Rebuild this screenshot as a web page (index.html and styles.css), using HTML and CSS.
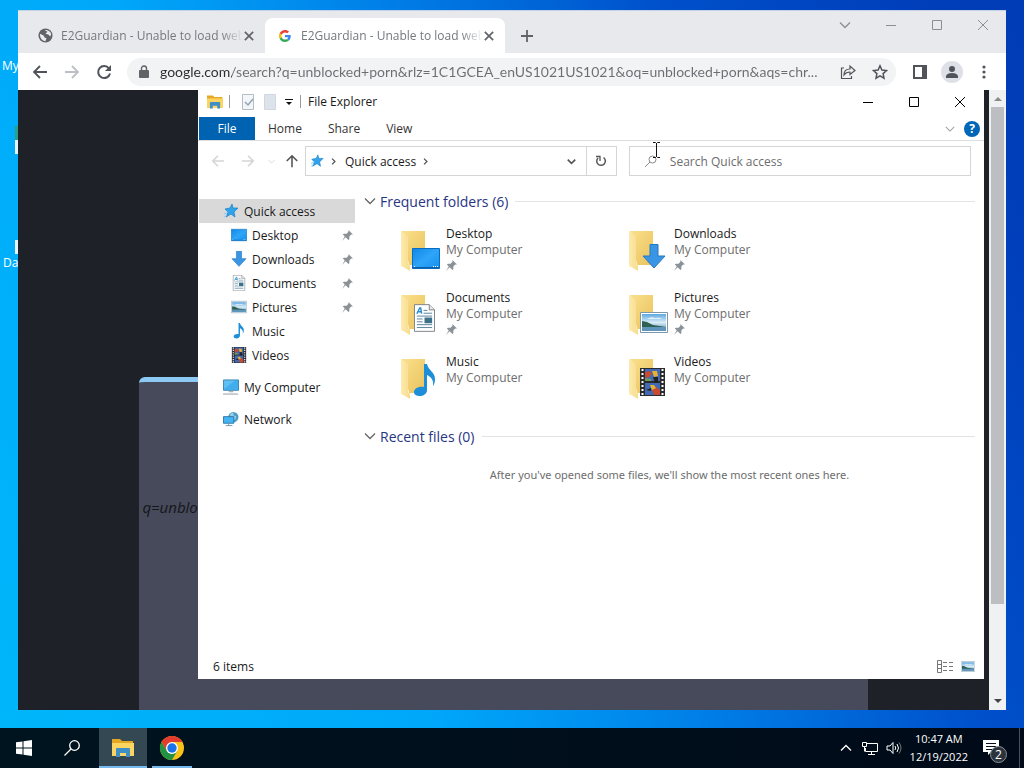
FILE: index.html
```html
<!DOCTYPE html>
<html lang="en">
  <head>
    <meta charset="UTF-8" />
    <meta name="viewport" content="width=device-width, initial-scale=1.0" />
    <title>Desktop</title>
    <link rel="stylesheet" href="styles.css">
  </head>
  <body>
    <!-- Shared icons -->
    <svg class="sprite" aria-hidden="true">
      <defs>
        <linearGradient id="gFolder" x1="0" y1="0" x2="1" y2="1">
          <stop offset="0" stop-color="#fbe08d" />
          <stop offset="1" stop-color="#e9c25c" />
        </linearGradient>
        <linearGradient id="gFront" x1="0" y1="0" x2="1" y2="0">
          <stop offset="0" stop-color="#fdeaae" />
          <stop offset="1" stop-color="#f6dc8b" />
        </linearGradient>
        <linearGradient id="gBlue" x1="0" y1="0" x2="1" y2="1">
          <stop offset="0" stop-color="#0f86e6" />
          <stop offset="0.5" stop-color="#2ea5f8" />
          <stop offset="1" stop-color="#1490f0" />
        </linearGradient>
        <linearGradient id="gSky" x1="0" y1="0" x2="0" y2="1">
          <stop offset="0" stop-color="#5ea8e0" />
          <stop offset="0.5" stop-color="#d9ecf7" />
          <stop offset="1" stop-color="#4d86b0" />
        </linearGradient>
      </defs>
      <symbol id="folder" viewBox="0 0 40 44">
        <path d="M2 3h23v34H9z" fill="url(#gFolder)" />
        <path d="M1 3l7 5v28l2 2v5l-5-3-4-2z" fill="url(#gFront)" />
      </symbol>
      <symbol id="desktop" viewBox="0 0 28 21">
        <path d="M.5.5h27v20H.5z" fill="url(#gBlue)" stroke="#0a6cc0" />
        <path d="M1 19.500h26" stroke="#0b5fa8" />
        <path d="M2 18.500h1M21 18.500h1M23 18.500h1M25 18.500h1" stroke="#fff" />
      </symbol>
      <symbol id="download" viewBox="0 0 24 25">
        <path d="M8 .5h8V12h7L12 24 1 12h7z" fill="#3a96e4" stroke="#2479c4" />
      </symbol>
      <symbol id="document" viewBox="0 0 22 29">
        <path d="M.5.5H16L21.500 6v22.500H.5z" fill="#fff" stroke="#7b8287" />
        <path d="M16 .5V6h5.500" fill="#e4e8ea" stroke="#7b8287" />
        <path d="M3 10l3-6h1l1 6M4.500 8H8" fill="none" stroke="#2b8dc9" stroke-width="1.500" />
        <path d="M10 6.500h4M10 9.500h9M3 12.500h16M3 15.500h6M3 18.500h6M3 21.500h16M3 24.500h16" stroke="#55819c" />
        <path d="M11 14h8v6h-8z" fill="#3c718a" />
      </symbol>
      <symbol id="picture" viewBox="0 0 28 21">
        <path d="M.5.5h27v20H.5z" fill="#fff" stroke="#7d98aa" />
        <path d="M2 2h24v17H2z" fill="url(#gSky)" />
        <path d="M2 9l5 1 6 3 13 2v1H2z" fill="#2f6150" />
        <path d="M2 15h24v4H2z" fill="#5f95bd" />
        <path d="M7 7q4-3 8-1 5-1 7 1z" fill="#fff" opacity=".7" />
      </symbol>
      <symbol id="music" viewBox="0 0 22 33">
        <path d="M10 0h3c1 6 8 8 8 15 0 3-1 6-2 7 1-6-2-9-6-11v15c0 4-4 6-7 6s-6-1-6-4 4-6 10-5z" fill="#1d8fd8" />
      </symbol>
      <symbol id="video" viewBox="0 0 25 28">
        <path d="M0 0h25v28H0z" fill="#292b2d" />
        <path d="M5 1h15v12H5zM5 15h15v12H5z" fill="#4169b4" />
        <path d="M2.500 1v27M22.500 1v27" stroke="#fff" stroke-width="2" stroke-dasharray="2 2" />
        <path d="M5 4l5-1 2 3-4 4-3-1zM12 22l4-3 4 3v5h-6z" fill="#c84a32" />
        <path d="M12 3h5l1 5-4 1zM10 17h4l2 3-4 2z" fill="#e8b230" />
        <path d="M13 9h5v6h-3zM6 22l5-2v3z" fill="#222" />
        <path d="M5 10l6 1v2H5z" fill="#6b9e58" />
      </symbol>
      <symbol id="star" viewBox="0 0 16 16">
        <path d="M9 1l1 4 5 0-4 4 1 5-4-3-5 3 2-5-3-3 5-1z" fill="#2fa3ec" stroke="#1b7fc6" stroke-width=".7" />
        <path d="M1 11l4-2M1 14l3-2" stroke="#8fcdf4" />
      </symbol>
      <symbol id="pin" viewBox="0 0 12 12">
        <path d="M7 0l5 5-2 0-2 2 0 3-1 1-3-3-4 4 3-5-2-2 1-1 3 0 2-2z" fill="#8a9298" />
      </symbol>
      <symbol id="computer" viewBox="0 0 17 16">
        <path d="M.5.5h16v11H.5z" fill="#5cc0f5" stroke="#3a83ad" />
        <path d="M1 10L13 1h3v10H1z" fill="#2fa0e6" opacity=".6" />
        <path d="M6 13h5M0 15.500h16" stroke="#8d9ba4" />
      </symbol>
      <symbol id="network" viewBox="0 0 17 16">
        <circle cx="11" cy="6" r="5.500" fill="#4f9cc4" />
        <path d="M7 3l4-2v3l3 1-1 4-3-1z" fill="#9bd0e8" />
        <path d="M.5 5.500h11v7H.5z" fill="#45b4f2" stroke="#2c76a6" />
        <path d="M3 15h7M6 13v2" stroke="#6d98b3" />
      </symbol>
      <symbol id="explorer" viewBox="0 0 22 18">
        <path d="M0 0h8l2 2h11v15H0z" fill="#e5a823" />
        <path d="M0 4h22v13H0z" fill="#fcd462" />
        <path d="M4 18V10q0-1 1-1h12q1 0 1 1v8h-4v-4H8v4z" fill="#3f8fc7" />
        <path d="M8 15h6v2H8z" fill="#f7d774" />
      </symbol>
      <symbol id="chevron" viewBox="0 0 12 12">
        <path d="M1 3.500l5 5 5-5" fill="none" stroke="currentColor" stroke-width="1.300" />
      </symbol>
      <symbol id="chevron-bold" viewBox="0 0 12 12">
        <path d="M1 3.500l5 5 5-5" fill="none" stroke="currentColor" stroke-width="2.200" />
      </symbol>
      <symbol id="arrow" viewBox="0 0 16 16">
        <path d="M15 8H2M8 2L2 8l6 6" fill="none" stroke="currentColor" stroke-width="1.800" />
      </symbol>
      <symbol id="cross" viewBox="0 0 12 12">
        <path d="M1 1l10 10M11 1L1 11" fill="none" stroke="currentColor" />
      </symbol>
      <symbol id="cross-bold" viewBox="0 0 12 12">
        <path d="M1 1l10 10M11 1L1 11" fill="none" stroke="currentColor" stroke-width="2" />
      </symbol>
      <symbol id="square" viewBox="0 0 12 12">
        <path d="M1.500 1.500h9v9h-9z" fill="none" stroke="currentColor" />
      </symbol>
      <symbol id="dash" viewBox="0 0 12 12">
        <path d="M1 6.500h10" stroke="currentColor" />
      </symbol>
    </svg>

    <main class="desktop">
      <div class="shortcut shortcut-computer"><span>My Computer</span></div>
      <div class="shortcut shortcut-app"><i></i></div>
      <div class="shortcut shortcut-data"><i></i><span>Data</span></div>

      <!-- Browser window -->
      <section class="window browser">
        <div class="tab-strip">
          <div class="tab">
            <svg class="favicon" viewBox="0 0 16 16">
              <circle cx="8" cy="8" r="7.500" fill="#5f6368" />
              <path d="M2 6l4 2 1 2 2 1-1 3Q2 13 2 6zM7 2l3 2-2 2 3 1 2 2 1-2q0-4-5-5z" fill="#e8eaed" />
            </svg>
            <span class="tab-title">E2Guardian - Unable to load web</span>
            <button class="tab-close" aria-label="Close tab"><svg><use href="#cross-bold" /></svg></button>
          </div>
          <div class="tab active">
            <svg class="favicon google" viewBox="0 0 48 48">
              <path fill="#ea4335" d="M24 9.500c3.540 0 6.710 1.220 9.210 3.600l6.850-6.850C35.900 2.380 30.470 0 24 0 14.620 0 6.510 5.380 2.560 13.220l7.980 6.190C12.430 13.720 17.740 9.500 24 9.500z" />
              <path fill="#4285f4" d="M46.980 24.550c0-1.570-.15-3.090-.38-4.550H24v9.020h12.940c-.58 2.960-2.260 5.480-4.780 7.180l7.730 6c4.510-4.180 7.090-10.360 7.090-17.650z" />
              <path fill="#fbbc05" d="M10.530 28.590A14.500 14.500 0 0 1 10.530 19.410L2.560 13.220A24 24 0 0 0 2.560 34.780z" />
              <path fill="#34a853" d="M24 48c6.480 0 11.930-2.130 15.890-5.810l-7.730-6c-2.150 1.450-4.920 2.300-8.160 2.300-6.260 0-11.570-4.220-13.470-9.910l-7.980 6.190C6.510 42.620 14.620 48 24 48z" />
            </svg>
            <span class="tab-title">E2Guardian - Unable to load web</span>
            <button class="tab-close" aria-label="Close tab"><svg><use href="#cross-bold" /></svg></button>
          </div>
          <button class="new-tab" aria-label="New tab">
            <svg viewBox="0 0 12 12"><path d="M6 0v12M0 6h12" stroke="currentColor" stroke-width="1.800" /></svg>
          </button>
          <div class="window-controls">
            <button aria-label="Search tabs"><svg><use href="#chevron" /></svg></button>
            <button aria-label="Minimize"><svg><use href="#dash" /></svg></button>
            <button aria-label="Maximize"><svg><use href="#square" /></svg></button>
            <button aria-label="Close"><svg><use href="#cross" /></svg></button>
          </div>
        </div>

        <div class="toolbar">
          <button aria-label="Back"><svg><use href="#arrow" /></svg></button>
          <button class="forward" aria-label="Forward"><svg><use href="#arrow" /></svg></button>
          <button aria-label="Reload">
            <svg viewBox="0 0 16 16"><path d="M13 4.500A6 6 0 1 0 14 9.500" fill="none" stroke="currentColor" stroke-width="2" /><path d="M15 1v6H9z" fill="currentColor" /></svg>
          </button>
          <div class="omnibox">
            <svg class="lock" viewBox="0 0 10 14"><path d="M1 5h8q1 0 1 1v6q0 1-1 1H1q-1 0-1-1V6q0-1 1-1z" fill="#5f6368" /><path d="M2.500 6V3.500a2.500 2.500 0 0 1 5 0V6" fill="none" stroke="#5f6368" stroke-width="1.400" /></svg>
            <input type="text" aria-label="Address" value="google.com/search?q=unblocked+porn&amp;rlz=1C1GCEA_enUS1021US1021&amp;oq=unblocked+porn&amp;aqs=chr..." />
            <button aria-label="Share">
              <svg viewBox="0 0 16 16"><path d="M4 4H1.500v10.500h10V12M4 11q0-6 6-6V2l5 4.500-5 4V8Q6 8 4 11z" fill="none" stroke="currentColor" stroke-width="1.200" /></svg>
            </button>
            <button aria-label="Bookmark">
              <svg viewBox="0 0 16 16"><path d="M8 1.800l1.900 4.200 4.600.5-3.400 3.100.9 4.600L8 11.900l-4 2.300.9-4.600L1.500 6.500 6.100 6z" fill="none" stroke="currentColor" stroke-width="1.500" /></svg>
            </button>
          </div>
          <button aria-label="Side panel">
            <svg viewBox="0 0 16 16"><path d="M2 2h12v12H2z" fill="none" stroke="currentColor" stroke-width="2" /><path d="M10 2h4v12h-4z" fill="currentColor" /></svg>
          </button>
          <button class="profile" aria-label="Profile">
            <svg viewBox="0 0 16 16"><circle cx="8" cy="5" r="3" fill="currentColor" /><path d="M2 14v-2q1-3 6-3t6 3v2z" fill="currentColor" /></svg>
          </button>
          <button aria-label="Menu">
            <svg viewBox="0 0 16 16" fill="currentColor"><circle cx="8" cy="3" r="1.600" /><circle cx="8" cy="8" r="1.600" /><circle cx="8" cy="13" r="1.600" /></svg>
          </button>
        </div>

        <div class="viewport">
          <div class="page">
            <div class="blocked-card"><p>q=unblocked+porn</p></div>
          </div>
          <div class="scrollbar">
            <span class="scroll-up"></span>
            <span class="scroll-thumb"></span>
            <span class="scroll-down"></span>
          </div>
        </div>
      </section>

      <!-- File Explorer window -->
      <section class="window explorer">
        <div class="title-bar">
          <svg class="app-icon"><use href="#explorer" /></svg>
          <span class="divider"></span>
          <svg class="quick" viewBox="0 0 14 16"><path d="M1.500.5h11v15h-11z" fill="#f3f6f9" stroke="#b4bcc4" /><path d="M4 8l3 3 5-6" fill="none" stroke="#92a5b5" stroke-width="1.500" /></svg>
          <svg class="quick" viewBox="0 0 14 16"><path d="M1.500.5h11v15h-11z" fill="#dde3ea" stroke="#d0d7df" /></svg>
          <svg class="quick-menu" viewBox="0 0 8 8"><path d="M0 1.500h8" stroke="#111" /><path d="M1 4h6L4 7z" fill="#111" /></svg>
          <span class="divider"></span>
          <h1>File Explorer</h1>
          <div class="window-controls">
            <button aria-label="Minimize"><svg><use href="#dash" /></svg></button>
            <button aria-label="Maximize"><svg><use href="#square" /></svg></button>
            <button aria-label="Close"><svg><use href="#cross" /></svg></button>
          </div>
        </div>

        <div class="ribbon">
          <button class="file">File</button>
          <button>Home</button>
          <button>Share</button>
          <button>View</button>
          <svg class="expand"><use href="#chevron" /></svg>
          <button class="help" aria-label="Help">?</button>
        </div>

        <div class="address-row">
          <button class="nav" aria-label="Back"><svg><use href="#arrow" /></svg></button>
          <button class="nav forward" aria-label="Forward"><svg><use href="#arrow" /></svg></button>
          <svg class="recent"><use href="#chevron" /></svg>
          <button class="nav up" aria-label="Up"><svg><use href="#arrow" /></svg></button>
          <div class="address">
            <svg class="address-star"><use href="#star" /></svg>
            <svg class="crumb"><use href="#chevron-bold" /></svg>
            <a href="#">Quick access</a>
            <svg class="crumb"><use href="#chevron-bold" /></svg>
            <svg class="address-caret"><use href="#chevron-bold" /></svg>
            <button class="refresh" aria-label="Refresh">
              <svg viewBox="0 0 12 12"><path d="M8.500 2.500A4.300 4.300 0 1 1 3 3" fill="none" stroke="currentColor" stroke-width="1.500" /><path d="M1 1.500h4V6" fill="none" stroke="currentColor" stroke-width="1.300" /></svg>
            </button>
          </div>
          <div class="search">
            <svg viewBox="0 0 14 14"><circle cx="8.500" cy="5.500" r="3.500" fill="none" stroke="#8b8b8b" /><path d="M6 8l-5 5" stroke="#8b8b8b" /></svg>
            <input type="search" placeholder="Search Quick access" aria-label="Search Quick access" />
          </div>
        </div>

        <div class="explorer-body">
          <nav class="sidebar">
            <a href="#" class="root selected"><svg><use href="#star" /></svg>Quick access</a>
            <a href="#"><svg><use href="#desktop" /></svg>Desktop<svg class="pin"><use href="#pin" /></svg></a>
            <a href="#"><svg><use href="#download" /></svg>Downloads<svg class="pin"><use href="#pin" /></svg></a>
            <a href="#"><svg><use href="#document" /></svg>Documents<svg class="pin"><use href="#pin" /></svg></a>
            <a href="#"><svg><use href="#picture" /></svg>Pictures<svg class="pin"><use href="#pin" /></svg></a>
            <a href="#"><svg><use href="#music" /></svg>Music</a>
            <a href="#"><svg><use href="#video" /></svg>Videos</a>
            <a href="#" class="root group"><svg><use href="#computer" /></svg>My Computer</a>
            <a href="#" class="root group"><svg><use href="#network" /></svg>Network</a>
          </nav>

          <div class="content">
            <h2><svg><use href="#chevron" /></svg>Frequent folders (6)</h2>
            <div class="folders">
              <a href="#" class="tile">
                <span class="thumb"><svg class="base"><use href="#folder" /></svg><svg class="badge wide"><use href="#desktop" /></svg></span>
                <span class="label"><b>Desktop</b><small>My Computer</small><svg class="pin"><use href="#pin" /></svg></span>
              </a>
              <a href="#" class="tile">
                <span class="thumb"><svg class="base"><use href="#folder" /></svg><svg class="badge down"><use href="#download" /></svg></span>
                <span class="label"><b>Downloads</b><small>My Computer</small><svg class="pin"><use href="#pin" /></svg></span>
              </a>
              <a href="#" class="tile">
                <span class="thumb"><svg class="base"><use href="#folder" /></svg><svg class="badge doc"><use href="#document" /></svg></span>
                <span class="label"><b>Documents</b><small>My Computer</small><svg class="pin"><use href="#pin" /></svg></span>
              </a>
              <a href="#" class="tile">
                <span class="thumb"><svg class="base"><use href="#folder" /></svg><svg class="badge wide"><use href="#picture" /></svg></span>
                <span class="label"><b>Pictures</b><small>My Computer</small><svg class="pin"><use href="#pin" /></svg></span>
              </a>
              <a href="#" class="tile">
                <span class="thumb"><svg class="base"><use href="#folder" /></svg><svg class="badge note"><use href="#music" /></svg></span>
                <span class="label"><b>Music</b><small>My Computer</small></span>
              </a>
              <a href="#" class="tile">
                <span class="thumb"><svg class="base"><use href="#folder" /></svg><svg class="badge film"><use href="#video" /></svg></span>
                <span class="label"><b>Videos</b><small>My Computer</small></span>
              </a>
            </div>
            <h2><svg><use href="#chevron" /></svg>Recent files (0)</h2>
            <p class="empty">After you've opened some files, we'll show the most recent ones here.</p>
          </div>
        </div>

        <div class="status-bar">
          <span>6 items</span>
          <svg viewBox="0 0 16 13"><path d="M.5.500h4v12h-4zM.5 4.500h4M.5 8.500h4" fill="none" stroke="#777" /><path d="M6 2.500h4M12 2.500h4M6 6.500h4M12 6.500h4M6 10.500h4M12 10.500h4" stroke="#777" /></svg>
          <svg class="view-large"><use href="#picture" /></svg>
        </div>
      </section>

      <svg class="cursor" viewBox="0 0 7 16"><path d="M0 .5h2.500l1 1 1-1H7M3.500 1v14M0 15.500h2.500l1-1 1 1H7" fill="none" stroke="#111" /></svg>
    </main>

    <footer class="taskbar">
      <button class="task" aria-label="Start">
        <svg class="start" viewBox="0 0 16 16" fill="#fff"><path d="M0 2.300l6.500-.9v6.100H0zM7.500 1.200L16 0v7.500H7.500zM0 8.500h6.500v6.100L0 13.700zM7.500 8.500H16V16l-8.500-1.200z" /></svg>
      </button>
      <button class="task" aria-label="Search">
        <svg class="find" viewBox="0 0 16 16" fill="none" stroke="#fff" stroke-width="1.300"><circle cx="10.500" cy="5.500" r="4.800" /><path d="M7 9l-6.500 6.500" /></svg>
      </button>
      <button class="task open current" aria-label="File Explorer"><svg class="folder-task"><use href="#explorer" /></svg></button>
      <button class="task open" aria-label="Chrome">
        <svg class="chrome" viewBox="0 0 24 24">
          <circle cx="12" cy="12" r="12" fill="#fbc116" />
          <path d="M1.600 6A12 12 0 0 1 22.400 6H12L6.800 15z" fill="#e33b2e" />
          <path d="M1.600 6A12 12 0 0 0 12 24l5.200-9L12 18 6.800 15z" fill="#229342" />
          <circle cx="12" cy="12" r="6" fill="#fff" />
          <circle cx="12" cy="12" r="4.700" fill="#1a73e8" />
        </svg>
      </button>
      <div class="tray">
        <svg class="tray-caret"><use href="#chevron" /></svg>
        <svg class="tray-icon" viewBox="0 0 16 14" fill="none" stroke="#fff"><path d="M5 2.500h10.500v8H3.500V7M.5 1.500h4v4h-4zM2.500 5.500v5M6 13.500h7M9.500 10.500v3" /></svg>
        <svg class="tray-icon" viewBox="0 0 16 14" fill="none" stroke="#fff"><path d="M1 5h3l3-3.500v11L4 9H1zM9 5q1.500 2 0 4M11 3q3 4 0 8" /><path d="M13 1.500q4 5.500 0 11" stroke="#777" /></svg>
        <div class="clock"><time>10:47 AM</time><time>12/19/2022</time></div>
        <button class="notifications" aria-label="Notifications">
          <svg viewBox="0 0 16 16"><path d="M0 0h16v12H8l-3 3v-3H0z" fill="#fff" /><path d="M3 3.500h10M3 6.500h10M3 9.500h7" stroke="#04101c" /></svg>
          <span>2</span>
        </button>
        <button class="show-desktop" aria-label="Show desktop"></button>
      </div>
    </footer>
  </body>
</html>
```
FILE: styles.css
```css
* {
  margin: 0;
  padding: 0;
  box-sizing: border-box;
}

body {
  height: 100vh;
  display: flex;
  flex-direction: column;
  overflow: hidden;
  font-family: "Open Sans", "Noto Sans", sans-serif;
  font-size: 12px;
  color: #1a1a1a;
}

button {
  border: none;
  background: transparent;
  font: inherit;
  color: inherit;
  display: flex;
  align-items: center;
  justify-content: center;
}

a {
  color: inherit;
  text-decoration: none;
}

input {
  border: none;
  outline: none;
  background: transparent;
  font: inherit;
  min-width: 0;
  flex: 1;
}

svg {
  display: block;
  flex: none;
}

.sprite {
  position: absolute;
  width: 0;
  height: 0;
}

/* Desktop */
.desktop {
  flex: 1;
  position: relative;
  background: linear-gradient(66deg, #00b6fa 0%, #00a8fa 32%, #0080e8 52%, #0050cb 73%, #003eba 92%, #003cb4 100%);
}

.shortcut {
  position: absolute;
  left: 2px;
  color: #fff;
  white-space: nowrap;
}

.shortcut-computer {
  top: 57px;
}

.shortcut-app {
  top: 126px;
}

.shortcut-data {
  top: 240px;
}

.shortcut i {
  display: block;
  width: 4px;
  height: 14px;
  margin-left: 13px;
  background: #e8f4fc;
}

.shortcut-app i {
  height: 28px;
  background: linear-gradient(#2a9f8a 14px, #e8f4fc 14px);
}

.shortcut-data span {
  display: block;
  margin-left: 1px;
}

.window {
  position: absolute;
  display: flex;
  flex-direction: column;
}

.window-controls {
  display: flex;
  margin-left: auto;
}

.window-controls button {
  width: 46px;
}

.window-controls svg {
  width: 12px;
  height: 12px;
}

/* Browser */
.browser {
  top: 10px;
  right: 18px;
  bottom: 18px;
  left: 18px;
  border-top: 1px solid #c3d2e4;
  background: #fff;
  color: #5f6368;
}

.tab-strip {
  height: 42px;
  display: flex;
  align-items: flex-end;
  background: #e8e9ec;
}

.tab {
  width: 240px;
  height: 35px;
  padding: 0 10px 0 14px;
  display: flex;
  align-items: center;
}

.tab:first-child {
  width: 247px;
  padding-left: 20px;
}

.tab.active {
  background: #fff;
  border-radius: 8px 8px 0 0;
}

.favicon {
  width: 15px;
  height: 15px;
  margin-right: 8px;
}

.google {
  width: 12px;
  height: 12px;
  margin-right: 10px;
}

.tab-title {
  flex: 1;
  min-width: 0;
  white-space: nowrap;
  color: #75797d;
  -webkit-mask-image: linear-gradient(to right, #000 88%, transparent);
  mask-image: linear-gradient(to right, #000 88%, transparent);
}

.tab-close {
  width: 12px;
  height: 16px;
}

.tab-close svg {
  width: 10px;
  height: 10px;
}

.new-tab {
  width: 44px;
  height: 35px;
}

.new-tab svg {
  width: 12px;
  height: 12px;
}

.browser .window-controls {
  align-self: flex-start;
  height: 28px;
  color: #8b8e92;
}

.toolbar {
  height: 37px;
  padding: 0 6px;
  display: flex;
  align-items: center;
  color: #50545a;
}

.toolbar button {
  width: 32px;
  height: 28px;
}

.toolbar svg {
  width: 16px;
  height: 16px;
}

.toolbar .forward {
  color: #bcbfc3;
}

.forward svg {
  transform: scaleX(-1);
}

.omnibox {
  flex: 1;
  height: 28px;
  margin: 0 8px 0 7px;
  padding-left: 12px;
  display: flex;
  align-items: center;
  background: #f1f3f4;
  border-radius: 14px;
}

.omnibox .lock {
  width: 10px;
  height: 14px;
  margin-right: 11px;
}

.omnibox input {
  font-family: Lato, "Open Sans", sans-serif;
  font-size: 14px;
  background: linear-gradient(to right, #2a2d31 72px, #6a6e73 72px);
  -webkit-background-clip: text;
  background-clip: text;
  color: transparent;
}

.toolbar .profile {
  width: 22px;
  height: 22px;
  margin: 0 5px;
  border-radius: 50%;
  background: #dde0e6;
}

.viewport {
  flex: 1;
  min-height: 0;
  display: flex;
}

.page {
  flex: 1;
  display: flex;
  justify-content: center;
  padding-top: 287px;
  background: #1f2129;
}

.blocked-card {
  width: 75%;
  padding: 115px 3px 0;
  border-top: 5px solid #8ccaf5;
  border-radius: 6px 6px 0 0;
  background: #464a5a;
  color: #15161c;
  font-size: 15px;
  font-style: italic;
}

.scrollbar {
  width: 17px;
  padding: 7px 2px;
  display: flex;
  flex-direction: column;
  align-items: center;
  background: #f0f1f3;
}

.scroll-up,
.scroll-down {
  border: 4px solid transparent;
}

.scroll-up {
  border-top: none;
  border-bottom-color: #8b8b8b;
}

.scroll-down {
  margin-top: auto;
  border-bottom: none;
  border-top-color: #444;
}

.scroll-thumb {
  width: 100%;
  height: 82%;
  margin-top: 6px;
  background: #bcbec2;
}

/* File Explorer */
.explorer {
  top: 90px;
  right: 40px;
  bottom: 49px;
  left: 198px;
  background: #fff;
}

.title-bar {
  height: 23px;
  padding: 0 1px 0 9px;
  display: flex;
  align-items: center;
}

.title-bar h1 {
  font-size: 12px;
  font-weight: 400;
}

.title-bar .window-controls {
  color: #000;
}

.app-icon {
  width: 16px;
  height: 14px;
}

.divider {
  width: 1px;
  height: 13px;
  margin: 0 7px 0 6px;
  background: #9a9a9a;
}

.quick {
  width: 14px;
  height: 16px;
  margin: 0 4px;
}

.quick-menu {
  width: 8px;
  height: 8px;
  margin: 0 1px 0 4px;
}

.ribbon {
  height: 28px;
  padding: 4px 4px 0 1px;
  display: flex;
  align-items: center;
  border-bottom: 1px solid #dcdddf;
}

.ribbon button {
  height: 23px;
  padding: 0 13px;
  color: #333;
}

.ribbon .file {
  width: 56px;
  background: #0063b1;
  color: #fff;
}

.expand {
  width: 10px;
  height: 10px;
  margin-left: auto;
  color: #a0a0a0;
}

.ribbon .help {
  width: 16px;
  height: 16px;
  margin-left: 9px;
  padding: 0;
  border-radius: 50%;
  background: #0067b8;
  color: #fff;
  font-weight: 700;
}

.address-row {
  height: 40px;
  padding: 0 13px;
  display: flex;
  align-items: center;
}

.nav {
  width: 14px;
  height: 20px;
  margin-right: 16px;
  color: #d3d5d7;
}

.nav.forward {
  margin-right: 13px;
}

.nav svg {
  width: 14px;
  height: 14px;
}

.recent {
  width: 7px;
  height: 7px;
  margin-right: 10px;
  color: #d0d0d0;
}

.nav.up {
  margin-right: 6px;
  color: #555;
}

.up svg {
  transform: rotate(90deg);
}

.address,
.search {
  height: 30px;
  border: 1px solid #d4d5d6;
  display: flex;
  align-items: center;
}

.address {
  flex: 19;
  margin-right: 12px;
}

.address-star {
  width: 14px;
  height: 14px;
  margin: 0 6px 0 4px;
}

.crumb {
  width: 7px;
  height: 7px;
  color: #555;
  transform: rotate(-90deg);
}

.address a {
  margin: 0 6px 0 8px;
}

.address-caret {
  width: 9px;
  height: 9px;
  margin: 0 10px 0 auto;
  color: #555;
}

.refresh {
  width: 30px;
  height: 28px;
  border-left: 1px solid #d4d5d6;
  color: #555;
}

.refresh svg {
  width: 12px;
  height: 12px;
}

.search {
  flex: 20;
  padding-left: 14px;
}

.search svg {
  width: 14px;
  height: 14px;
  margin-right: 12px;
}

.search input::placeholder {
  color: #6d6d6d;
}

.explorer-body {
  flex: 1;
  min-height: 0;
  display: flex;
}

.sidebar {
  width: 157px;
  padding: 18px 0 0 1px;
}

.sidebar a {
  height: 24px;
  padding: 0 2px 0 32px;
  display: flex;
  align-items: center;
}

.sidebar a.root {
  padding-left: 24px;
}

.sidebar a.selected {
  background: #d9d9d9;
}

.sidebar a.group {
  margin-top: 8px;
}

.sidebar svg {
  width: 16px;
  height: 16px;
  margin-right: 5px;
}

.sidebar .pin {
  margin: 0 0 0 auto;
}

.pin,
.sidebar .pin {
  width: 11px;
  height: 11px;
}

.content {
  flex: 1;
  padding: 9px 9px 0;
}

.content h2 {
  height: 22px;
  display: flex;
  align-items: center;
  color: #283583;
  font-size: 14px;
  font-weight: 400;
}

.content h2::after {
  content: "";
  flex: 1;
  height: 1px;
  margin-left: 7px;
  background: #e2e3e6;
}

.content h2 svg {
  width: 12px;
  height: 12px;
  margin-right: 4px;
  color: #666;
}

.folders {
  padding: 14px 0 7px 36px;
  display: grid;
  grid-template-columns: repeat(auto-fill, 228px);
  grid-auto-rows: 64px;
}

.tile {
  display: flex;
}

.thumb {
  position: relative;
  width: 40px;
  height: 44px;
  margin: 2px 6px 0 0;
}

.base {
  width: 40px;
  height: 44px;
}

.badge {
  position: absolute;
}

.badge.wide {
  left: 12px;
  top: 20px;
  width: 28px;
  height: 21px;
}

.badge.down {
  left: 14px;
  top: 16px;
  width: 24px;
  height: 25px;
}

.badge.doc {
  left: 14px;
  top: 12px;
  width: 21px;
  height: 28px;
}

.badge.note {
  left: 14px;
  top: 8px;
  width: 22px;
  height: 33px;
}

.badge.film {
  left: 12px;
  top: 12px;
  width: 25px;
  height: 28px;
}

.label {
  line-height: 16px;
}

.label b,
.label small {
  display: block;
  font-size: 12px;
  font-weight: 400;
}

.label small {
  color: #6d6d6d;
}

.label .pin {
  margin-top: 2px;
}

.empty {
  margin-top: 20px;
  font-family: "Noto Sans", sans-serif;
  font-size: 11px;
  line-height: 16px;
  text-align: center;
  color: #6d6d6d;
}

.status-bar {
  height: 25px;
  padding: 0 9px 0 15px;
  display: flex;
  align-items: center;
  gap: 8px;
}

.status-bar span {
  margin-right: auto;
}

.status-bar svg {
  width: 16px;
  height: 13px;
}

.status-bar .view-large {
  width: 14px;
}

.cursor {
  position: absolute;
  left: 653px;
  top: 142px;
  width: 7px;
  height: 16px;
}

/* Taskbar */
.taskbar {
  height: 40px;
  display: flex;
  background: linear-gradient(to right, #00141f, #000a18);
  color: #fff;
}

.task {
  width: 48px;
  position: relative;
}

.task.current {
  margin: 0 1px 0 3px;
  background: #334852;
}

.task.open::after {
  content: "";
  position: absolute;
  right: 4px;
  bottom: 0;
  left: 4px;
  height: 2px;
  background: #76b9ed;
}

.task.current::after {
  right: 0;
  left: 0;
}

.start,
.find {
  width: 16px;
  height: 16px;
}

.folder-task {
  width: 22px;
  height: 18px;
}

.chrome {
  width: 24px;
  height: 24px;
}

.tray {
  margin-left: auto;
  display: flex;
  align-items: center;
}

.tray-caret {
  width: 12px;
  height: 12px;
  margin-right: 10px;
  transform: rotate(180deg);
}

.tray-icon {
  width: 16px;
  height: 14px;
  margin-right: 8px;
}

.clock {
  font-size: 11px;
  line-height: 18px;
  text-align: center;
}

.clock time {
  display: block;
}

.notifications {
  position: relative;
  margin: 0 20px 0 15px;
}

.notifications svg {
  width: 16px;
  height: 16px;
}

.notifications span {
  position: absolute;
  left: 7px;
  top: 6px;
  width: 17px;
  height: 17px;
  border: 1px solid #8a9298;
  border-radius: 50%;
  background: #2b343c;
  font-size: 12px;
  line-height: 15px;
}

.show-desktop {
  width: 5px;
  height: 40px;
  border-left: 1px solid #46525e;
}
```
